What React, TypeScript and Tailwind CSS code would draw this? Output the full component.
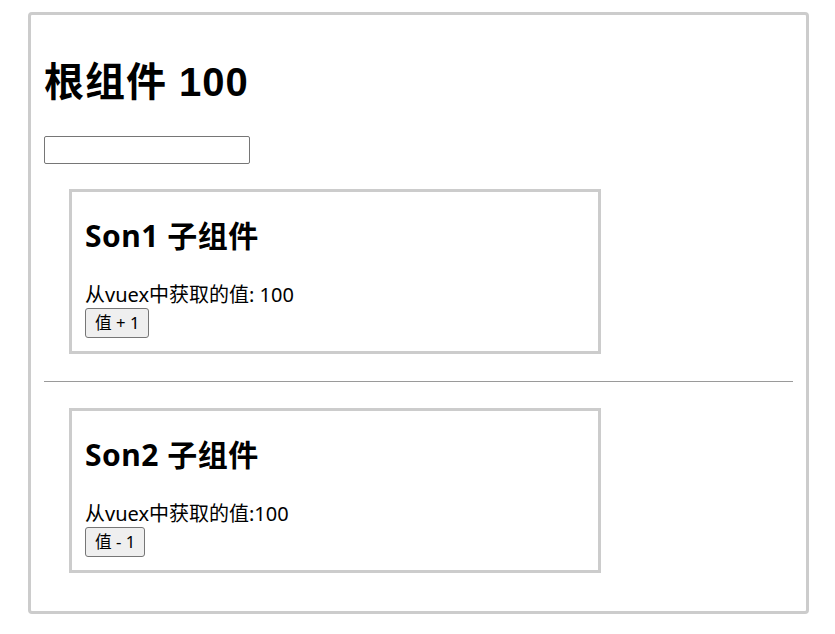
const FONT = "font-['Noto_Sans','Noto_Sans_CJK_SC',sans-serif]"

function SonBox({ name, label, value, action }: { name: string; label: string; value: number; action: string }) {
  return (
    <div className="ml-[25px] w-[532px] border-[3px] border-[#cccccc] px-[13px] pb-[13px]">
      <h2 className="mt-[24px] text-[30px] font-bold leading-[40px] tracking-[0.5px] text-black">{name} 子组件</h2>
      <p className="mt-[26px] text-[20px] leading-[26px] text-black">
        {label}
        {value}
      </p>
      <button
        type="button"
        className="block h-[30px] rounded-[3px] border border-[#767676] bg-[#efefef] px-[9px] text-[16.7px] leading-[20px] text-black"
      >
        {action}
      </button>
    </div>
  )
}

export default function App() {
  return (
    <div className={`${FONT} min-h-[634px] bg-white pt-[12px]`}>
      <div className="ml-[28px] h-[602px] w-[781px] rounded-[4px] border-[3px] border-[#cccccc] px-[13px]">
        <h1 className="mt-[43px] font-['Liberation_Sans','Noto_Sans_CJK_SC',sans-serif] text-[40px] font-bold leading-[48px] tracking-[1px] text-black">
          根组件 100
        </h1>
        <input type="text" className="mt-[30px] block h-[28px] w-[206px] rounded-[2px] border border-[#767676] bg-white px-[3px]" />
        <div className="mt-[25px]">
          <SonBox name="Son1" label="从vuex中获取的值: " value={100} action="值 + 1" />
        </div>
        <hr className="mt-[27px] border-t border-[#9a9a9a]" />
        <div className="mt-[26px]">
          <SonBox name="Son2" label="从vuex中获取的值:" value={100} action="值 - 1" />
        </div>
      </div>
    </div>
  )
}
